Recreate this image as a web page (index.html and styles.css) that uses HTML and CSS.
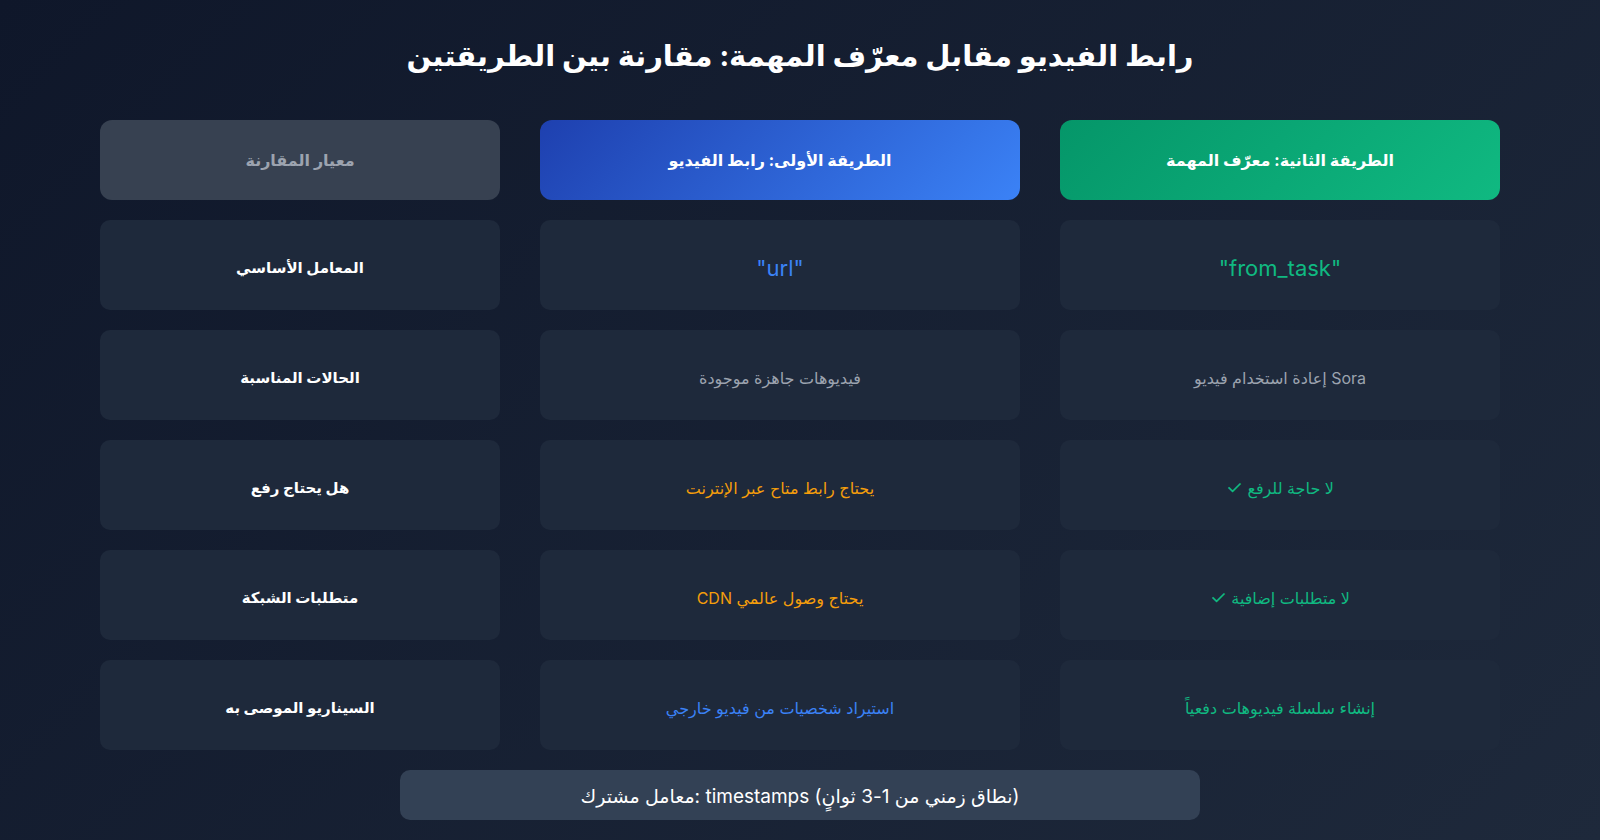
FILE: index.html
```html
<!DOCTYPE html>
<html lang="ar">
<head>
<meta charset="utf-8">
<title>رابط الفيديو مقابل معرّف المهمة</title>
<link rel="stylesheet" href="styles.css">
</head>
<body>
<div class="page">
  <h1 class="title" dir="rtl">رابط الفيديو مقابل معرّف المهمة: مقارنة بين الطريقتين</h1>
  <div class="grid">
    <div class="cell head head-criteria" dir="rtl">معيار المقارنة</div>
    <div class="cell head head-url" dir="rtl">الطريقة الأولى: رابط الفيديو</div>
    <div class="cell head head-task" dir="rtl">الطريقة الثانية: معرّف المهمة</div>

    <div class="cell crit" dir="rtl">المعامل الأساسي</div>
    <div class="cell code code-blue">"url"</div>
    <div class="cell code code-green">"from_task"</div>

    <div class="cell crit" dir="rtl">الحالات المناسبة</div>
    <div class="cell val muted" dir="rtl">فيديوهات جاهزة موجودة</div>
    <div class="cell val muted" dir="rtl">Sora إعادة استخدام فيديو</div>

    <div class="cell crit" dir="rtl">هل يحتاج رفع</div>
    <div class="cell val orange" dir="rtl">يحتاج رابط متاح عبر الإنترنت</div>
    <div class="cell val green" dir="rtl"><span>لا حاجة للرفع <span class="check">✓</span></span></div>

    <div class="cell crit" dir="rtl">متطلبات الشبكة</div>
    <div class="cell val orange" dir="rtl">يحتاج وصول عالمي CDN</div>
    <div class="cell val green" dir="rtl"><span>لا متطلبات إضافية <span class="check">✓</span></span></div>

    <div class="cell crit" dir="rtl">السيناريو الموصى به</div>
    <div class="cell val blue" dir="rtl">استيراد شخصيات من فيديو خارجي</div>
    <div class="cell val green" dir="rtl">إنشاء سلسلة فيديوهات دفعياً</div>
  </div>
  <div class="footer" dir="ltr">معامل مشترك: timestamps (نطاق زمني من 1-3 ثوانٍ)</div>
</div>
</body>
</html>
```
FILE: styles.css
```css
html, body {
  margin: 0;
  padding: 0;
}
body {
  width: 1600px;
  height: 840px;
  overflow: hidden;
  background: linear-gradient(135deg, #0f172a 0%, #1e293b 100%);
  font-family: "Inter", "DejaVu Sans", sans-serif;
  color: #ffffff;
}
.page {
  display: flex;
  flex-direction: column;
  align-items: center;
  padding-top: 35px;
}
.title {
  margin: 0;
  font-size: 29px;
  line-height: 42px;
  font-weight: 700;
  color: #ffffff;
  text-align: center;
}
.grid {
  margin-top: 43px;
  width: 1400px;
  display: grid;
  grid-template-columns: 1fr 1.2fr 1.1fr;
  grid-template-rows: 80px repeat(5, 90px);
  column-gap: 40px;
  row-gap: 20px;
}
.cell {
  display: flex;
  align-items: center;
  justify-content: center;
  border-radius: 10px;
  background: #1e293b;
  font-size: 16px;
  text-align: center;
  padding-top: 5px;
  box-sizing: border-box;
}
.head {
  padding-top: 0;
  border-radius: 12px;
  font-size: 16px;
  font-weight: 700;
  color: #ffffff;
}
.head-criteria {
  background: #374151;
  color: #9ca3af;
}
.head-url {
  background: linear-gradient(135deg, #1e40af 0%, #3b82f6 100%);
}
.head-task {
  background: linear-gradient(135deg, #059669 0%, #10b981 100%);
}
.crit {
  font-size: 15px;
  font-weight: 700;
  color: #ffffff;
}
.code {
  font-size: 22px;
  padding-top: 6px;
}
.check {
  font-size: 19px;
}
.code-blue { color: #3b82f6; }
.code-green { color: #10b981; }
.muted { color: #9ca3af; }
.orange { color: #f59e0b; }
.green { color: #10b981; }
.blue { color: #3b82f6; }
.footer {
  margin-top: 20px;
  width: 800px;
  height: 50px;
  border-radius: 10px;
  background: #334155;
  display: flex;
  align-items: center;
  justify-content: center;
  font-size: 19px;
  color: #ffffff;
  padding-top: 3px;
  box-sizing: border-box;
}
```
